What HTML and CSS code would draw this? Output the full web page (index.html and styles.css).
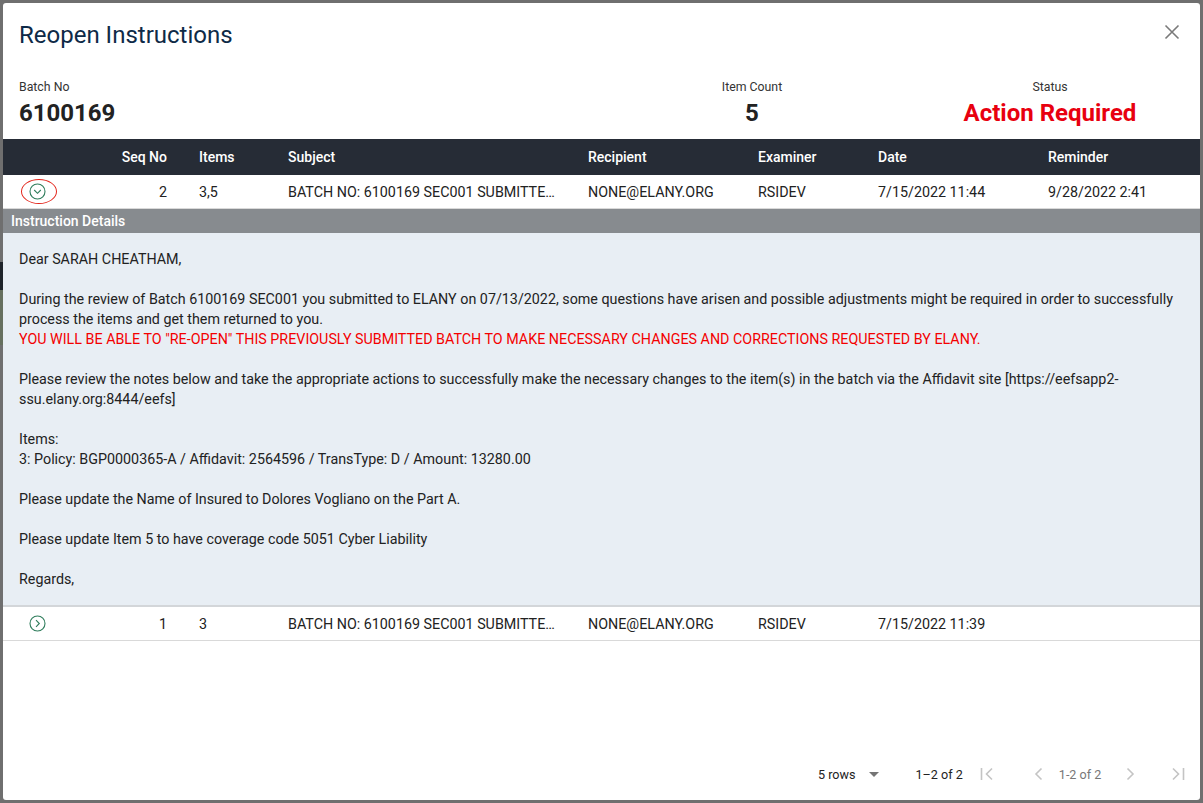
FILE: index.html
```html
<!DOCTYPE html>
<html>
<head>
<meta charset="utf-8">
<link rel="stylesheet" href="styles.css">
</head>
<body>
<div class="backdrop-strip"></div>
<div class="modal">
  <div class="modal-head">
    <h1 class="title">Reopen Instructions</h1>
    <button class="close" aria-label="close">
      <svg width="16" height="16" viewBox="0 0 16 16"><path d="M1.5 1.5L14.5 14.5M14.5 1.5L1.5 14.5" stroke="#7a7a7a" stroke-width="1.6" fill="none"/></svg>
    </button>
  </div>
  <div class="summary">
    <div class="sum sum-batch">
      <div class="sum-label">Batch No</div>
      <div class="sum-value">6100169</div>
    </div>
    <div class="sum sum-count">
      <div class="sum-label">Item Count</div>
      <div class="sum-value">5</div>
    </div>
    <div class="sum sum-status">
      <div class="sum-label">Status</div>
      <div class="sum-value red">Action Required</div>
    </div>
  </div>

  <div class="table">
    <div class="row thead">
      <div class="c c-icon"></div>
      <div class="c c-seq">Seq No</div>
      <div class="c">Items</div>
      <div class="c">Subject</div>
      <div class="c">Recipient</div>
      <div class="c">Examiner</div>
      <div class="c">Date</div>
      <div class="c">Reminder</div>
    </div>
    <div class="row tr tr-open">
      <div class="c c-icon">
        <svg width="17" height="17" viewBox="0 0 17 17"><circle cx="8.5" cy="8.5" r="7.5" stroke="#2f7d5c" stroke-width="1.1" fill="none"/><path d="M5.2 7L8.5 10.3L11.8 7" stroke="#2f7d5c" stroke-width="1.1" fill="none"/></svg>
        <span class="annot"></span>
      </div>
      <div class="c c-seq">2</div>
      <div class="c">3,5</div>
      <div class="c">BATCH NO: 6100169 SEC001 SUBMITTE…</div>
      <div class="c">NONE@ELANY.ORG</div>
      <div class="c">RSIDEV</div>
      <div class="c">7/15/2022 11:44</div>
      <div class="c">9/28/2022 2:41</div>
    </div>
    <div class="details">
      <div class="details-bar">Instruction Details</div>
      <div class="details-body">
        <p>Dear SARAH CHEATHAM,</p>
        <p>During the review of Batch 6100169 SEC001 you submitted to ELANY on 07/13/2022, some questions have arisen and possible adjustments might be required in order to successfully process the items and get them returned to you.<br><span class="red-text">YOU WILL BE ABLE TO "RE-OPEN" THIS PREVIOUSLY SUBMITTED BATCH TO MAKE NECESSARY CHANGES AND CORRECTIONS REQUESTED BY ELANY.</span></p>
        <p>Please review the notes below and take the appropriate actions to successfully make the necessary changes to the item(s) in the batch via the Affidavit site [https://eefsapp2-ssu.elany.org:8444/eefs]</p>
        <p>Items:<br>3: Policy: BGP0000365-A / Affidavit: 2564596 / TransType: D / Amount: 13280.00</p>
        <p>Please update the Name of Insured to Dolores Vogliano on the Part A.</p>
        <p>Please update Item 5 to have coverage code 5051 Cyber Liability</p>
        <p>Regards,</p>
      </div>
    </div>
    <div class="row tr">
      <div class="c c-icon">
        <svg width="17" height="17" viewBox="0 0 17 17"><circle cx="8.5" cy="8.5" r="7.5" stroke="#2f7d5c" stroke-width="1.1" fill="none"/><path d="M7 5.2L10.3 8.5L7 11.8" stroke="#2f7d5c" stroke-width="1.1" fill="none"/></svg>
      </div>
      <div class="c c-seq">1</div>
      <div class="c">3</div>
      <div class="c">BATCH NO: 6100169 SEC001 SUBMITTE…</div>
      <div class="c">NONE@ELANY.ORG</div>
      <div class="c">RSIDEV</div>
      <div class="c">7/15/2022 11:39</div>
      <div class="c"></div>
    </div>
  </div>

  <div class="spacer"></div>

  <div class="pager">
    <div class="rows">5 rows
      <svg width="10" height="5" viewBox="0 0 10 5"><path d="M0 0H10L5 5Z" fill="#757575"/></svg>
    </div>
    <div class="range">1–2 of 2</div>
    <svg class="pg pg-first" width="16" height="14" viewBox="0 0 16 14"><path d="M1.5 1V13" stroke="#c4c4c4" stroke-width="1.6"/><path d="M12 1.5L6.5 7L12 12.5" stroke="#c4c4c4" stroke-width="1.6" fill="none"/></svg>
    <svg class="pg pg-prev" width="10" height="14" viewBox="0 0 10 14"><path d="M7.5 1.5L2 7L7.5 12.5" stroke="#c4c4c4" stroke-width="1.6" fill="none"/></svg>
    <div class="pg-text">1-2 of 2</div>
    <svg class="pg pg-next" width="10" height="14" viewBox="0 0 10 14"><path d="M2.5 1.5L8 7L2.5 12.5" stroke="#c4c4c4" stroke-width="1.6" fill="none"/></svg>
    <svg class="pg pg-last" width="16" height="14" viewBox="0 0 16 14"><path d="M4 1.5L9.5 7L4 12.5" stroke="#c4c4c4" stroke-width="1.6" fill="none"/><path d="M14.5 1V13" stroke="#c4c4c4" stroke-width="1.6"/></svg>
  </div>
</div>
</body>
</html>
```

FILE: styles.css
```css
* { box-sizing: border-box; }
html, body { margin: 0; height: 100%; }
body {
  background: #6f6f6f;
  padding: 3px;
  font-family: Roboto, "Liberation Sans", Arial, sans-serif;
  color: #222;
  position: relative;
}
.backdrop-strip {
  position: absolute;
  left: 0; top: 0;
  width: 3px; height: 100%;
  background: linear-gradient(#6f6f6f 0, #6f6f6f 262px, #1e232a 262px, #1e232a 290px, #66705f 290px, #66705f 345px, #6f6f6f 345px);
}
.modal {
  position: relative;
  width: 1197px;
  height: 797px;
  background: #fff;
  border-radius: 3px;
  display: flex;
  flex-direction: column;
  overflow: hidden;
}
.modal-head {
  display: flex;
  justify-content: space-between;
  align-items: center;
  padding: 17px 16px 0 16px;
  height: 47px;
}
.title {
  margin: 0;
  font-size: 24px;
  font-weight: 400;
  color: #0e2a47;
  line-height: 30px;
}
.close {
  border: 0;
  background: none;
  padding: 0;
  margin-right: 4px;
  margin-top: -6px;
  display: flex;
  cursor: pointer;
}
.summary {
  display: grid;
  grid-template-columns: 633px 200px 78px 240px;
  padding: 29px 0 0 16px;
  height: 89px;
}
.sum-label {
  font-size: 12.3px;
  line-height: 16px;
  color: #333;
}
.sum-value {
  font-size: 24px;
  font-weight: 700;
  line-height: 30px;
  margin-top: 3px;
  color: #222;
}
.sum-count, .sum-status { text-align: center; }
.sum-status { grid-column: 4; }
.sum-value.red { color: #e8000f; }
.table { display: flex; flex-direction: column; }
.row {
  display: grid;
  grid-template-columns: 68px 112px 89px 300px 170px 120px 170px 1fr;
  align-items: center;
  font-size: 14.3px;
}
.c { padding-left: 16px; white-space: nowrap; }
.c.c-icon { padding: 0; display: flex; justify-content: center; position: relative; }
.c.c-seq { padding-left: 0; padding-right: 16px; text-align: right; }
.thead {
  background: #262c36;
  color: #fff;
  font-weight: 500;
  font-size: 14px;
  height: 36px;
}
.tr {
  height: 34px;
  border-bottom: 1px solid #d9d9d9;
  color: #222;
}
.tr .c-icon svg { display: block; }
.annot {
  position: absolute;
  left: 18px; top: -4px;
  width: 36px; height: 25px;
  border: 1.6px solid #e3261c;
  border-radius: 50%;
}
.details { border-bottom: 2px solid #d3d6d9; }
.details-bar {
  background: #878b8f;
  color: #fff;
  font-size: 14px;
  font-weight: 500;
  height: 24px;
  line-height: 24px;
  padding-left: 8px;
}
.details-body {
  background: #e8eef4;
  padding: 16px 16px 16px 16px;
  font-size: 14.3px;
  line-height: 20px;
  color: #222;
}
.details-body p { margin: 0 0 20px 0; }
.details-body p:last-child { margin-bottom: 0; }
.red-text { color: #f40000; }
.spacer { flex: 1; }
.pager {
  display: flex;
  align-items: center;
  height: 56px;
  padding-top: 4px;
  padding-left: 815px;
  font-size: 12.6px;
  color: #222;
}
.rows { display: flex; align-items: center; gap: 13px; }
.range { margin-left: 37px; }
.pg { display: block; }
.pg-first { margin-left: 17px; }
.pg-prev { margin-left: 38px; }
.pg-text { margin-left: 15px; color: #777; }
.pg-next { margin-left: 24px; }
.pg-last { margin-left: 34px; }
```
